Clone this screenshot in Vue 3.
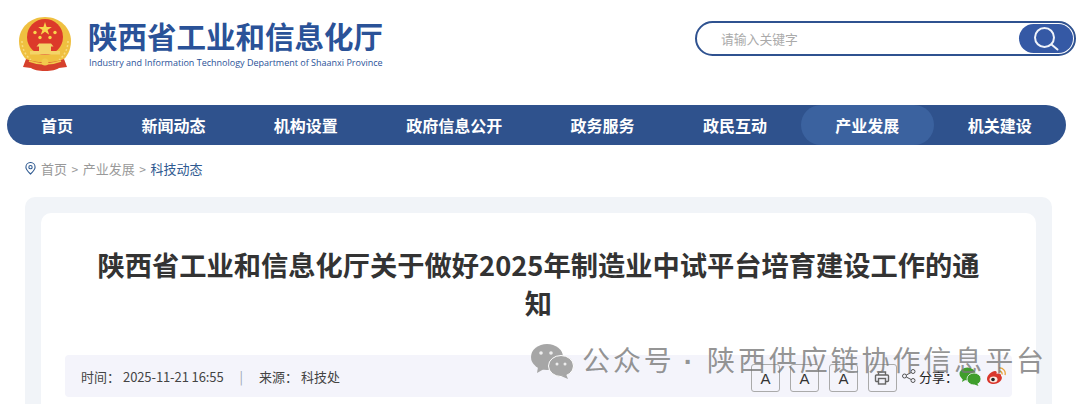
<script setup>
const navItems = ['首页', '新闻动态', '机构设置', '政府信息公开', '政务服务', '政民互动', '产业发展', '机关建设']
const smallStars = [[16, 15.5], [36, 15.5], [21, 20.5], [31, 20.5]]
</script>

<template>
  <div class="page">
    <header class="top">
      <div class="brand">
        <svg class="emblem" viewBox="0 0 52 54">
          <path d="M26 0C11 0 0 11 0 24c0 9 4 16 9 20l17 7 17-7c5-4 9-11 9-20C52 11 41 0 26 0z" fill="#efc040"/>
          <path d="M3 24c0 8 4 15 9 19M49 24c0 8-4 15-9 19" fill="none" stroke="#f8dc80" stroke-width="1.500" stroke-dasharray="2 2"/>
          <circle cx="26" cy="20" r="18" fill="#dc3a2a"/>
          <path d="M26 5l1.600 4.900h5.200l-4.200 3 1.600 4.900-4.200-3-4.200 3 1.600-4.900-4.200-3h5.200z" fill="#f8d64c"/>
          <circle v-for="(s, i) in smallStars" :key="i" :cx="s[0]" :cy="s[1]" r="1.700" fill="#f8d64c"/>
          <path d="M20 26.500h12l2.500 3H32V34H20v-4.500h-2.500z" fill="#f4d468"/>
          <path d="M11 34h30v3.500H11z" fill="#f4d468"/>
          <path d="M7 42c5 2 9 3 13 3h12c4 0 8-1 13-3l3 8-8 1c-3 2-7 3-14 3s-11-1-14-3l-8-1z" fill="#d6402c"/>
          <path d="M10 44c5 2 10 3 16 3s11-1 16-3" fill="none" stroke="#f2c94c" stroke-width="1.500"/>
          <circle cx="26" cy="45" r="3.500" fill="#f2c94c"/>
        </svg>
        <div class="brand-text">
          <div class="brand-cn">陕西省工业和信息化厅</div>
          <div class="brand-en">Industry and Information Technology Department of Shaanxi Province</div>
        </div>
      </div>
      <div class="search">
        <span class="placeholder">请输入关键字</span>
        <div class="search-btn">
          <svg viewBox="0 0 26 26" width="26" height="26" fill="none" stroke="#f0f3fa" stroke-width="2">
            <circle cx="11.500" cy="11.500" r="9.500"/>
            <path d="M18.500 18.500l6 5" stroke-linecap="round"/>
          </svg>
        </div>
      </div>
    </header>

    <nav class="nav">
      <a v-for="item in navItems" :key="item" class="nav-item" :class="{ active: item === '产业发展' }">{{ item }}</a>
    </nav>

    <div class="crumbs">
      <svg viewBox="0 0 12 14" width="11" height="13" fill="none" stroke="#2f5a91" stroke-width="1.200">
        <path d="M6 13C3 10 1 8 1 5.500a5 5 0 0 1 10 0C11 8 9 10 6 13z"/>
        <circle cx="6" cy="5.500" r="1.800"/>
      </svg>
      <span>首页</span><i>&gt;</i><span>产业发展</span><i>&gt;</i><span class="current">科技动态</span>
    </div>

    <div class="panel">
      <div class="card">
        <h1 class="title">陕西省工业和信息化厅关于做好2025年制造业中试平台培育建设工作的通知</h1>
        <div class="meta">
          <span class="meta-label">时间：</span>
          <span class="meta-date">2025-11-21 16:55</span>
          <span class="meta-sep">|</span>
          <span class="meta-label">来源：</span>
          <span>科技处</span>
          <div class="tools">
            <span class="font-btn">A</span>
            <span class="font-btn">A</span>
            <span class="font-btn">A</span>
            <span class="font-btn">
              <svg viewBox="0 0 16 16" width="16" height="16" fill="none" stroke="#666" stroke-width="1.400">
                <path d="M4.500 5V2h7v3"/>
                <path d="M4 11.500H2.500a1 1 0 0 1-1-1V6a1 1 0 0 1 1-1h11a1 1 0 0 1 1 1v4.500a1 1 0 0 1-1 1H12"/>
                <rect x="4.500" y="8.500" width="7" height="5.500"/>
              </svg>
            </span>
            <svg class="share-icon" viewBox="0 0 14 14" width="14" height="14" fill="none" stroke="#555" stroke-width="1">
              <circle cx="2.500" cy="7" r="2"/>
              <circle cx="11" cy="2.500" r="2"/>
              <circle cx="11" cy="11.500" r="2"/>
              <path d="M4.300 6l5-2.600M4.300 8l5 2.600"/>
            </svg>
            <span class="share-label">分享：</span>
            <svg class="wechat" viewBox="0 0 22 19" width="22" height="19">
              <ellipse cx="8.500" cy="7" rx="8" ry="6.500" fill="#3f9e2c"/>
              <path d="M4 11l-1 4 4-2.500z" fill="#3f9e2c"/>
              <ellipse cx="15" cy="12" rx="7" ry="6" fill="#3f9e2c" stroke="#f4f4fb" stroke-width="0.800"/>
              <path d="M18 16l1.500 3-4-1.500z" fill="#3f9e2c"/>
            </svg>
            <svg class="weibo" viewBox="0 0 20 18" width="20" height="18">
              <path d="M1 12c0-4 5-8 8-8 2 0 2 2 1.500 3 3-1 5 0 4.500 2 2 1 1 7-7 8-4 0-7-2-7-5z" fill="#d9362b"/>
              <ellipse cx="7.500" cy="12.500" rx="4" ry="3" fill="#fbe8e0"/>
              <circle cx="7" cy="12.500" r="1.800" fill="#222"/>
              <path d="M13 1a5.500 5.500 0 0 1 6 7M13 4a2.800 2.800 0 0 1 3 3.500" fill="none" stroke="#e9a33c" stroke-width="1.300"/>
            </svg>
          </div>
        </div>
      </div>
    </div>

    <div class="watermark">
      <svg viewBox="0 0 44 36" width="44" height="36">
        <ellipse cx="17" cy="14" rx="16" ry="13" fill="#a6a6a6"/>
        <path d="M8 24l-1 6 7-4z" fill="#a6a6a6"/>
        <ellipse cx="31" cy="23" rx="12.500" ry="10.500" fill="#a6a6a6" stroke="#fff" stroke-width="1"/>
        <path d="M36 31l2 5-7-3z" fill="#a6a6a6"/>
        <circle cx="11" cy="10" r="1.800" fill="#eee"/>
        <circle cx="21" cy="10" r="1.800" fill="#eee"/>
        <circle cx="27" cy="21" r="1.500" fill="#eee"/>
        <circle cx="35" cy="21" r="1.500" fill="#eee"/>
      </svg>
      <span class="wm-text">公众号<b class="dot">·</b>陕西供应链协作信息平台</span>
    </div>
  </div>
</template>

<style>
html, body {
  margin: 0;
  background: #fff;
  overflow: hidden;
}
</style>

<style scoped>
.page {
  position: relative;
  width: 1080px;
  height: 404px;
  overflow: hidden;
  font-family: "Noto Sans CJK SC", "Noto Sans", sans-serif;
  color: #333;
}

.top {
  display: flex;
  justify-content: space-between;
  height: 105px;
  padding: 0 4px 0 19px;
  box-sizing: border-box;
}

.brand {
  display: flex;
  gap: 17px;
  padding-top: 17px;
}

.emblem {
  width: 52px;
  height: 54px;
}

.brand-cn {
  font-size: 29.500px;
  font-weight: 700;
  line-height: 36px;
  color: #2a5298;
  white-space: nowrap;
}

.brand-en {
  margin: 3px 0 0 1px;
  font-family: "Open Sans", sans-serif;
  font-size: 9px;
  line-height: 14px;
  color: #2a5298;
  white-space: nowrap;
}

.search {
  display: flex;
  align-items: center;
  justify-content: space-between;
  width: 381px;
  height: 35px;
  margin-top: 21px;
  padding: 0 1px 0 24px;
  box-sizing: border-box;
  border: 2px solid #2f5290;
  border-radius: 18px;
}

.placeholder {
  font-size: 12.800px;
  color: #aaa;
}

.search-btn {
  display: flex;
  align-items: center;
  justify-content: center;
  width: 54px;
  height: 29px;
  border-radius: 15px;
  background: #3559a5;
}

.nav {
  display: flex;
  height: 40px;
  margin: 0 14px 0 7px;
  border-radius: 20px;
  background: #2f528d;
}

.nav-item {
  padding: 0 34.200px;
  font-size: 16px;
  font-weight: 700;
  line-height: 40px;
  color: #fff;
  white-space: nowrap;
}

.nav-item:first-child {
  padding-left: 34px;
}

.nav-item.active {
  border-radius: 20px;
  background: #3b629f;
}

.crumbs {
  display: flex;
  align-items: center;
  height: 46px;
  margin-bottom: 6px;
  padding-left: 25px;
  box-sizing: border-box;
  font-size: 13px;
  color: #999;
}

.crumbs svg {
  margin-right: 5px;
}

.crumbs i {
  margin: 0 4.500px;
  font-style: normal;
  font-size: 12px;
}

.crumbs .current {
  color: #2f5a91;
}

.panel {
  margin: 0 28px 0 25px;
  padding: 16px;
  height: 400px;
  box-sizing: border-box;
  border-radius: 10px;
  background: #f1f4f8;
}

.card {
  height: 100%;
  padding: 32px 24px 0;
  box-sizing: border-box;
  border-radius: 10px;
  background: #fff;
}

.title {
  margin: 0 0 34px;
  padding: 0 28px;
  font-size: 27.250px;
  font-weight: 700;
  line-height: 38px;
  text-align: center;
  color: #333;
}

.meta {
  display: flex;
  align-items: center;
  height: 42px;
  padding: 0 6px 0 16px;
  border-radius: 4px;
  background: #f4f4fb;
  font-size: 13px;
  color: #444;
}

.meta-label {
  margin-right: 3px;
}

.meta-date {
  letter-spacing: -0.100px;
}

.meta-sep {
  margin: 0 16px;
  color: #9aa5b5;
}

.tools {
  display: flex;
  align-items: center;
  margin: 4px 0 0 auto;
}

.font-btn {
  display: flex;
  align-items: center;
  justify-content: center;
  width: 27px;
  height: 26px;
  margin-right: 10px;
  border: 1px solid #aaa;
  border-radius: 3px;
  font-family: "Liberation Sans", sans-serif;
  font-size: 15px;
  color: #333;
}

.share-icon {
  margin: -4px 0 0 -5px;
}

.share-label {
  margin: -4px 1px 0 3px;
  color: #222;
}

.wechat,
.weibo {
  margin-top: -4px;
}

.weibo {
  margin-left: 5px;
}

.watermark {
  position: absolute;
  left: 530px;
  top: 342px;
  display: flex;
  align-items: center;
  gap: 8px;
  white-space: nowrap;
}

.wm-text {
  margin-top: -3px;
  font-size: 28px;
  letter-spacing: 2.900px;
  color: rgba(120, 120, 120, 0.8);
}

.dot {
  margin: 0 14px 0 9px;
  font-family: "Liberation Sans", sans-serif;
  font-weight: 700;
  letter-spacing: 0;
}
</style>
